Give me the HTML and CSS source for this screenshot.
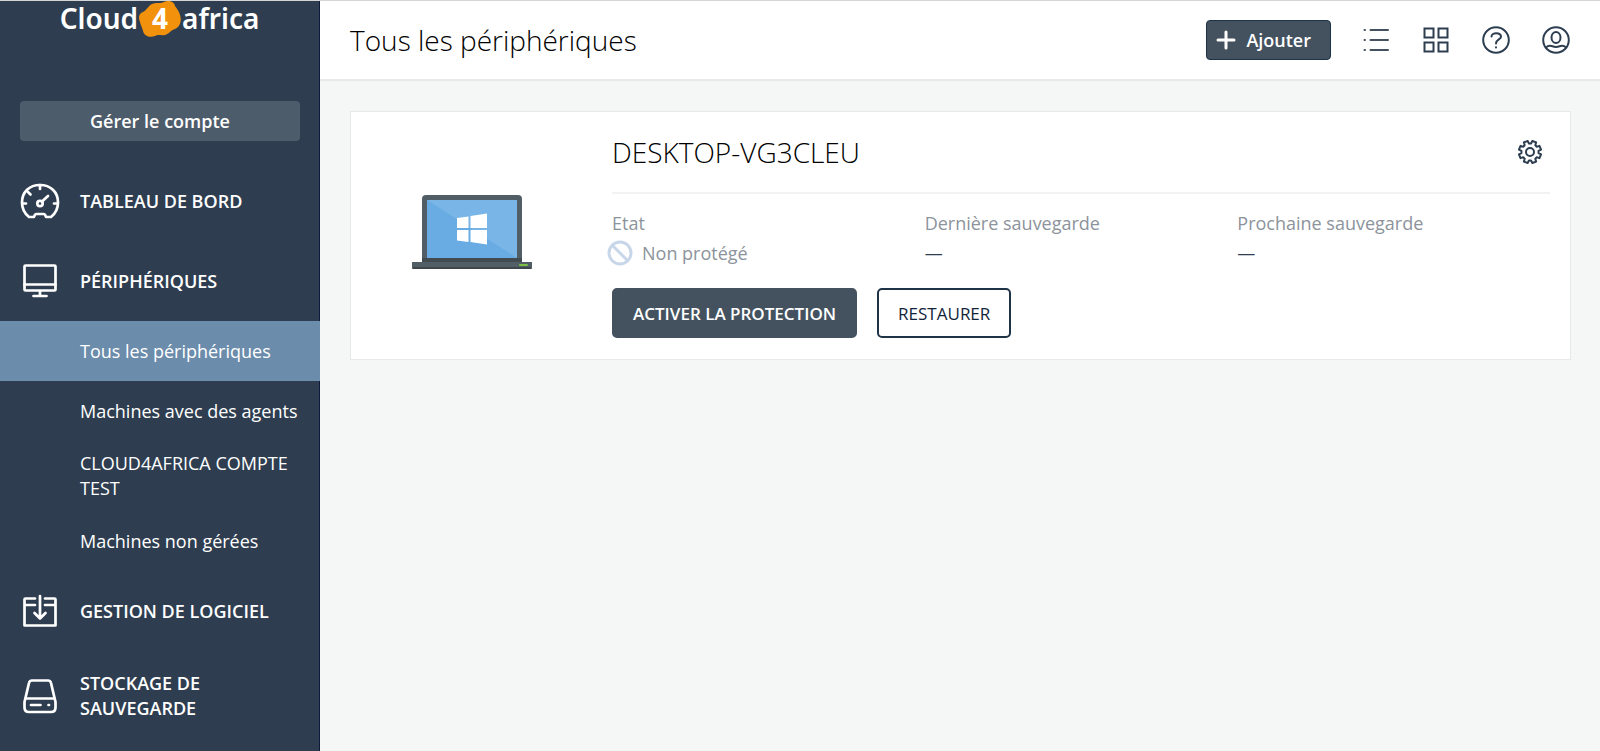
FILE: index.html
```html
<!DOCTYPE html>
<html lang="fr">
<head>
  <meta charset="UTF-8">
  <meta name="viewport" content="width=device-width, initial-scale=1">
  <title>Tous les périphériques</title>
  <link rel="stylesheet" href="styles.css">
</head>
<body>

  <div class="app">
    <aside class="sidebar">
      <div class="logo">
        <span>Cloud</span>
        <span class="logo-four">
          <svg class="logo-blob" viewBox="0 0 42 36" aria-hidden="true">
            <path d="M13 3C17 1 21 3 25 1C29-1 35 0 36 5C38 8 40 10 41 14C43 20 41 26 36 28C32 29 30 33 26 34C22 35 19 33 16 35C11 37 5 35 4 30C3 26 2 25 1 21C-1 17 0 12 4 11C8 9 9 5 13 3Z" fill="#f2920c"/>
          </svg>
          <span class="logo-digit">4</span>
        </span>
        <span>africa</span>
      </div>

      <button type="button" class="account-btn">Gérer le compte</button>

      <nav class="nav">
        <a href="#" class="nav-item">
          <svg class="nav-icon" viewBox="0 0 40 40">
            <path d="M9 36C4 32 2 27 2 21.500C2 11 9.500 4 20 4S38 11 38 21.500C38 27 36 32 31 36H26C25.500 34 25 33 23.500 33H16.500C15 33 14.500 34 14 36Z"/>
            <path d="M20 4V8M8 11L10.500 13.500M2.500 22.500H6M34 22.500H37.500M22 20.500L28 15"/>
            <circle cx="20" cy="22.500" r="2.700"/>
          </svg>
          TABLEAU DE BORD
        </a>
        <a href="#" class="nav-item">
          <svg class="nav-icon" viewBox="0 0 40 40">
            <rect x="4.500" y="4.500" width="31" height="25" rx="1"/>
            <path d="M4.500 23.500H35.500M20 30V35M13.500 35H26.500"/>
          </svg>
          PÉRIPHÉRIQUES
        </a>
        <a href="#" class="nav-sub active">Tous les périphériques</a>
        <a href="#" class="nav-sub">Machines avec des agents</a>
        <a href="#" class="nav-sub">CLOUD4AFRICA COMPTE TEST</a>
        <a href="#" class="nav-sub">Machines non gérées</a>
        <a href="#" class="nav-item">
          <svg class="nav-icon" viewBox="0 0 40 40">
            <path d="M15 7.500H5.500Q4.500 7.500 4.500 8.500V34.500H35.500V8.500Q35.500 7.500 34.500 7.500H25M4.500 14H15M25 14H35.500M20 5V27M14.500 22L20 27.500L25.500 22"/>
          </svg>
          GESTION DE LOGICIEL
        </a>
        <a href="#" class="nav-item">
          <svg class="nav-icon" viewBox="0 0 40 40">
            <path d="M12 4.500H28Q30.500 4.500 31 7L35.500 26V31.500Q35.500 36 31 36H9Q4.500 36 4.500 31.500V26L9 7Q9.500 4.500 12 4.500ZM5.500 22.500H34.500"/>
            <path d="M11 29H20.500M28.500 29H29"/>
          </svg>
          STOCKAGE DE SAUVEGARDE
        </a>
      </nav>
    </aside>

    <div class="main">
      <header class="topbar">
        <h1>Tous les périphériques</h1>
        <div class="actions">
          <button type="button" class="add-btn">
            <svg width="20" height="20" viewBox="0 0 20 20"><path d="M10 2V18M2 10H18"/></svg>
            Ajouter
          </button>
          <button type="button" class="icon-btn" aria-label="Liste">
            <svg width="30" height="30" viewBox="0 0 30 30">
              <path d="M9.500 5H27M9.500 15H27M9.500 25H27M3.500 5H4M3.500 15H4M3.500 25H4" stroke="#44525f"/>
            </svg>
          </button>
          <button type="button" class="icon-btn" aria-label="Grille">
            <svg width="30" height="30" viewBox="0 0 30 30">
              <path d="M3.500 3.500H12.500V12.500H3.500ZM17.500 3.500H26.500V12.500H17.500ZM3.500 17.500H12.500V26.500H3.500ZM17.500 17.500H26.500V26.500H17.500Z" stroke-linejoin="miter"/>
            </svg>
          </button>
          <button type="button" class="icon-btn" aria-label="Aide">
            <svg width="30" height="30" viewBox="0 0 30 30">
              <circle cx="15" cy="15" r="12.800"/>
              <path d="M10.500 11.500C10.500 7 20 7 20 11.700C20 14.500 15 14.500 15 18.500M15 22.300V22.600"/>
            </svg>
          </button>
          <button type="button" class="icon-btn" aria-label="Profil">
            <svg width="30" height="30" viewBox="0 0 30 30">
              <circle cx="15" cy="15" r="12.800"/>
              <ellipse cx="15" cy="12.500" rx="4.500" ry="5.500"/>
              <path d="M5 22.500C7 20.500 9.500 20.500 11.500 21.300C14 22.300 16 22.300 18.500 21.300C20.500 20.500 23 20.500 25 22.500"/>
            </svg>
          </button>
        </div>
      </header>

      <main class="content">
        <section class="card">
          <div class="device-pic">
            <svg width="120" height="74" viewBox="0 0 120 74" aria-hidden="true">
              <path d="M10 67V4Q10 0 14 0H106Q110 0 110 4V67Z" fill="#525e65"/>
              <rect x="10" y="63" width="100" height="4" fill="#414b50"/>
              <rect x="15" y="5" width="90" height="58" fill="#68ace3"/>
              <path d="M15 5H105V63Z" fill="#79b5e6"/>
              <path d="M45 23L56.500 21.500V33H45ZM58.500 21L75 18.500V33H58.500ZM45 35H56.500V47L45 45.500ZM58.500 35H75V49.500L58.500 47Z" fill="#fff"/>
              <path d="M0 67H120V72Q119 74 117 74H3Q1 74 0 72Z" fill="#525e65"/>
              <rect y="72" width="120" height="2" rx="1" fill="#3d474c"/>
              <rect x="107" y="69" width="9" height="2" rx="1" fill="#7cc143"/>
            </svg>
          </div>

          <div class="device-info">
            <div class="device-head">
              <h2>DESKTOP-VG3CLEU</h2>
              <button type="button" class="gear-btn" aria-label="Paramètres">
                <svg width="24" height="24" viewBox="0 0 24 24">
                  <path d="M10.950 3.460H13.050L14.350 .95L18.150 2.520L17.290 5.220L18.780 6.710L21.480 5.850L23.050 9.650L20.540 10.950V13.050L23.050 14.350L21.480 18.150L18.780 17.290L17.290 18.780L18.150 21.480L14.350 23.050L13.050 20.540H10.950L9.650 23.050L5.850 21.480L6.710 18.780L5.220 17.290L2.520 18.150L.95 14.350L3.460 13.050V10.950L.95 9.650L2.520 5.850L5.220 6.710L6.710 5.220L5.850 2.520L9.650 .95Z"/>
                  <circle cx="12" cy="12" r="4"/>
                </svg>
              </button>
            </div>

            <dl class="stats">
              <div>
                <dt>Etat</dt>
                <dd class="state">
                  <svg width="26" height="26" viewBox="0 0 26 26" aria-hidden="true">
                    <circle cx="13" cy="13" r="11"/>
                    <path d="M5.500 5.500L20.500 20.500"/>
                  </svg>
                  Non protégé
                </dd>
              </div>
              <div>
                <dt>Dernière sauvegarde</dt>
                <dd>—</dd>
              </div>
              <div>
                <dt>Prochaine sauvegarde</dt>
                <dd>—</dd>
              </div>
            </dl>

            <div class="buttons">
              <button type="button" class="btn btn-primary">ACTIVER LA PROTECTION</button>
              <button type="button" class="btn btn-outline">RESTAURER</button>
            </div>
          </div>
        </section>
      </main>
    </div>
  </div>

</body>
</html>
```
FILE: styles.css
```css
* {
  box-sizing: border-box;
}

body {
  margin: 0;
  font-family: "Open Sans", "Noto Sans", sans-serif;
  font-size: 18px;
  line-height: 25px;
  color: #2d3e50;
  background: #f5f7f7;
}

button {
  font-family: inherit;
  font-size: 18px;
  line-height: 25px;
  cursor: pointer;
}

svg {
  display: block;
  flex: none;
  fill: none;
  stroke-linecap: round;
  stroke-linejoin: round;
}

.app {
  display: flex;
  min-height: 100vh;
  border-top: 1px solid #d3d5d6;
}

/* sidebar */
.sidebar {
  flex: none;
  width: 320px;
  background: #2e3e50;
  border-right: 1px solid #0d1a3c;
}

.logo {
  display: flex;
  justify-content: center;
  height: 100px;
  font-family: "Noto Sans", sans-serif;
  font-size: 28px;
  font-weight: 600;
  line-height: 34px;
  color: #fff;
}

.logo-four {
  position: relative;
  width: 42px;
  height: 36px;
  margin: 0 1px;
  text-align: center;
}

.logo-blob {
  position: absolute;
  inset: 0;
}

.logo-digit {
  position: relative;
  font-weight: 700;
}

.account-btn {
  display: block;
  width: 280px;
  height: 40px;
  margin: 0 20px 20px;
  padding: 0;
  border: none;
  border-radius: 4px;
  background: #4d5c6a;
  color: #fff;
  font-weight: 600;
}

.nav a {
  display: flex;
  align-items: center;
  color: #fff;
  text-decoration: none;
}

.nav-item {
  gap: 20px;
  min-height: 80px;
  padding: 20px;
  font-weight: 600;
}

.nav-icon {
  width: 40px;
  height: 40px;
  stroke: #fff;
  stroke-width: 2.7;
}

.nav-sub {
  min-height: 60px;
  padding: 10px 20px 10px 80px;
}

.nav-sub.active {
  margin-right: -1px;
  background: #6b8cab;
}

/* top bar */
.main {
  flex: 1;
  min-width: 0;
}

.topbar {
  display: flex;
  align-items: center;
  justify-content: space-between;
  height: 80px;
  padding: 0 29px 0 30px;
  background: #fff;
  border-bottom: 2px solid #e6e8ec;
}

h1,
h2 {
  margin: 0;
  font-size: 28px;
  font-weight: 300;
  line-height: 36px;
  color: #000;
}

.actions {
  display: flex;
  align-items: center;
  gap: 30px;
}

.add-btn {
  display: flex;
  align-items: center;
  gap: 10px;
  height: 40px;
  padding: 0 19px 0 9px;
  border: 1px solid #1f3347;
  border-radius: 4px;
  background: #44525f;
  color: #fff;
  font-weight: 600;
}

.add-btn svg {
  stroke: #fff;
  stroke-width: 3;
}

.icon-btn,
.gear-btn {
  padding: 0;
  border: none;
  background: none;
}

.icon-btn svg,
.gear-btn svg {
  stroke: #2d3e50;
  stroke-width: 2;
}

/* device card */
.content {
  padding: 30px 29px 30px 30px;
}

.card {
  display: flex;
  padding: 0 20px 21px 0;
  background: #fff;
  border: 1px solid #e6e8e9;
}

.device-pic {
  display: flex;
  flex: none;
  align-items: center;
  justify-content: center;
  width: 261px;
  padding: 14px 20px 0 0;
}

.device-info {
  flex: 1;
  min-width: 0;
}

.device-head {
  display: flex;
  align-items: center;
  justify-content: space-between;
  height: 82px;
  padding-right: 8px;
  border-bottom: 2px solid #f1f2f3;
}

.stats {
  display: grid;
  grid-template-columns: repeat(3, 1fr);
  margin: 14px 0 20px;
  color: #8c939b;
}

.stats dt,
.stats dd {
  margin: 0;
  line-height: 30px;
}

.stats dd {
  color: #2d3e50;
}

.stats .state {
  display: flex;
  align-items: center;
  gap: 9px;
  margin-left: -5px;
  color: #8c939b;
}

.state svg {
  stroke: #c8d6e9;
  stroke-width: 3;
}

.buttons {
  display: flex;
  gap: 20px;
}

.btn {
  height: 50px;
  padding: 0 19px;
  border: 2px solid #1f3347;
  border-radius: 5px;
  font-size: 17px;
}

.btn-primary {
  border-color: #44525f;
  background: #44525f;
  color: #fff;
  font-weight: 600;
}

.btn-outline {
  background: #fff;
  color: #12243a;
}
```
